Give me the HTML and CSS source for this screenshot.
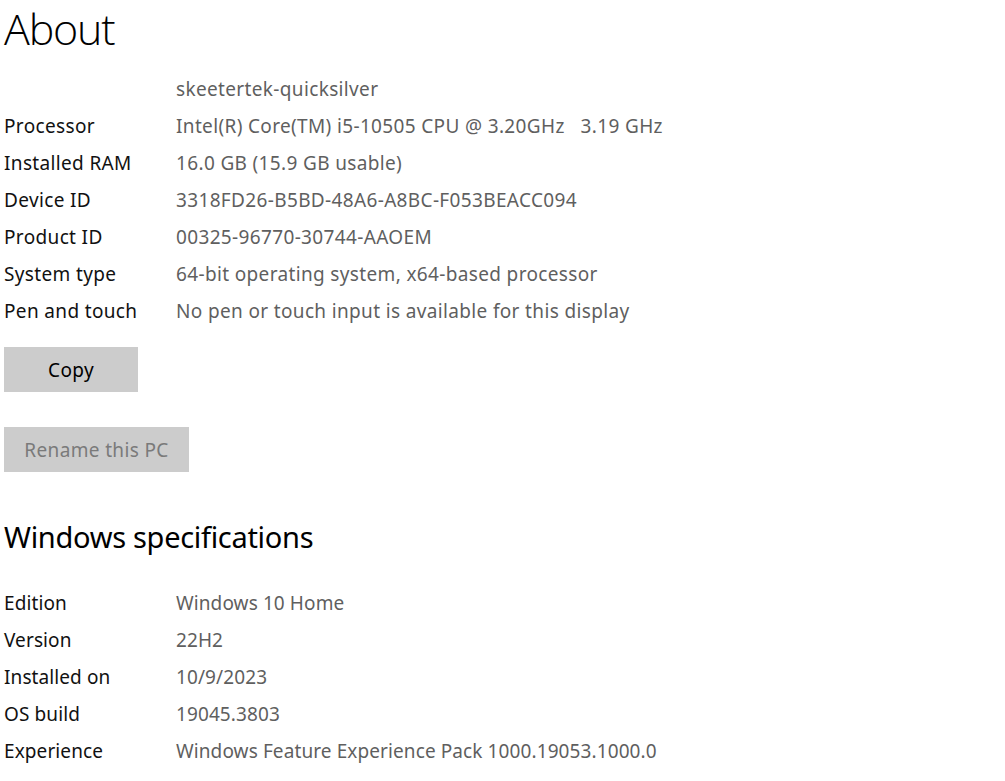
FILE: index.html
```html
<!DOCTYPE html>
<html lang="en">
<head>
<meta charset="utf-8">
<title>About</title>
<link rel="stylesheet" href="styles.css">
</head>
<body>
<main class="page">
  <h1 class="title">About</h1>
  <dl class="specs specs-device">
    <dt class="label"></dt><dd class="value">skeetertek-quicksilver</dd>
    <dt class="label">Processor</dt><dd class="value">Intel(R) Core(TM) i5-10505 CPU @ 3.20GHz&nbsp;&nbsp;&nbsp;3.19 GHz</dd>
    <dt class="label">Installed RAM</dt><dd class="value">16.0 GB (15.9 GB usable)</dd>
    <dt class="label">Device ID</dt><dd class="value">3318FD26-B5BD-48A6-A8BC-F053BEACC094</dd>
    <dt class="label">Product ID</dt><dd class="value">00325-96770-30744-AAOEM</dd>
    <dt class="label">System type</dt><dd class="value">64-bit operating system, x64-based processor</dd>
    <dt class="label">Pen and touch</dt><dd class="value">No pen or touch input is available for this display</dd>
  </dl>
  <div class="actions">
    <button class="btn btn-copy" type="button">Copy</button>
    <button class="btn btn-rename" type="button" disabled>Rename this PC</button>
  </div>
  <h2 class="subtitle">Windows specifications</h2>
  <dl class="specs specs-windows">
    <dt class="label">Edition</dt><dd class="value">Windows 10 Home</dd>
    <dt class="label">Version</dt><dd class="value">22H2</dd>
    <dt class="label">Installed on</dt><dd class="value">10/9/2023</dd>
    <dt class="label">OS build</dt><dd class="value">19045.3803</dd>
    <dt class="label">Experience</dt><dd class="value">Windows Feature Experience Pack 1000.19053.1000.0</dd>
  </dl>
</main>
</body>
</html>
```
FILE: styles.css
```css
html, body {
  margin: 0;
  padding: 0;
  background: #ffffff;
}

body {
  font-family: "Noto Sans", "Open Sans", sans-serif;
  color: #000000;
}

.page {
  padding-left: 4px;
}

.title {
  margin: 0;
  font-family: "Open Sans", "Noto Sans", sans-serif;
  font-size: 43px;
  font-weight: 300;
  line-height: 58px;
  letter-spacing: -1.2px;
}

.specs {
  display: grid;
  grid-template-columns: 172px auto;
  grid-auto-rows: 37px;
  margin: 0;
  font-size: 19px;
  line-height: 37px;
  letter-spacing: 0.35px;
}

.specs-device {
  margin-top: 13px;
}

.label {
  margin: 0;
  color: #111111;
}

.value {
  margin: 0;
  color: #5f5f5f;
  white-space: nowrap;
}

.actions {
  display: flex;
  flex-direction: column;
  align-items: flex-start;
  gap: 35px;
  margin-top: 17px;
}

.btn {
  height: 45px;
  border: none;
  background: #cccccc;
  font-family: inherit;
  font-size: 19px;
  letter-spacing: 0.35px;
  padding: 0;
}

.btn-copy {
  width: 134px;
  color: #000000;
}

.btn-rename {
  width: 185px;
  color: #7a7a7a;
}

.subtitle {
  margin: 45px 0 0;
  font-size: 29px;
  font-weight: 400;
  line-height: 40px;
  letter-spacing: -0.3px;
}

.specs-windows {
  margin-top: 28px;
  letter-spacing: 0.1px;
}
```
